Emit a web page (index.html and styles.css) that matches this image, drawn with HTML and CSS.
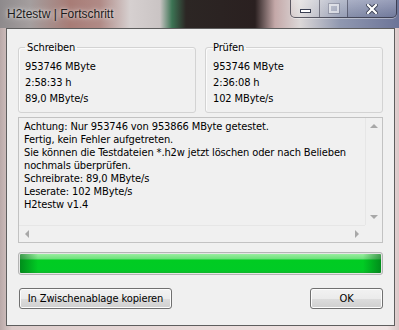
FILE: index.html
```html
<!DOCTYPE html>
<html lang="de">
<head>
    <meta charset="UTF-8">
    <title>H2testw | Fortschritt</title>
    <link rel="stylesheet" href="styles.css">
</head>
<body>

    <div class="window">
        <div class="titlebar">
            <span class="title">H2testw | Fortschritt</span>
            <div class="caption">
                <span class="cap cap-min"><i></i></span>
                <span class="cap cap-max"><i></i></span>
                <span class="cap cap-close">
                    <svg width="12" height="10" viewBox="0 0 12 10">
                        <path d="M2 1 L10 9 M10 1 L2 9" stroke="#3a3f52" stroke-width="4" stroke-linecap="square"/>
                        <path d="M2 1 L10 9 M10 1 L2 9" stroke="#fff" stroke-width="2.2" stroke-linecap="square"/>
                    </svg>
                </span>
            </div>
        </div>

        <div class="client">
            <div class="groups">
                <fieldset class="group">
                    <legend>Schreiben</legend>
                    <div class="row">953746 MByte</div>
                    <div class="row">2:58:33 h</div>
                    <div class="row">89,0 MByte/s</div>
                </fieldset>
                <fieldset class="group group-right">
                    <legend>Prüfen</legend>
                    <div class="row">953746 MByte</div>
                    <div class="row">2:36:08 h</div>
                    <div class="row">102 MByte/s</div>
                </fieldset>
            </div>

            <div class="log">
                <div class="log-text">
                    <div>Achtung: Nur 953746 von 953866 MByte getestet.</div>
                    <div>Fertig, kein Fehler aufgetreten.</div>
                    <div>Sie können die Testdateien *.h2w jetzt löschen oder nach Belieben</div>
                    <div>nochmals überprüfen.</div>
                    <div>Schreibrate: 89,0 MByte/s</div>
                    <div>Leserate: 102 MByte/s</div>
                    <div>H2testw v1.4</div>
                </div>
                <div class="vscroll">
                    <span class="arrow"><i class="tri tri-up"></i></span>
                    <span class="track"></span>
                    <span class="arrow"><i class="tri tri-down"></i></span>
                </div>
                <div class="hscroll">
                    <span class="arrow"><i class="tri tri-left"></i></span>
                    <span class="track"></span>
                    <span class="arrow"><i class="tri tri-right"></i></span>
                </div>
                <div class="corner"></div>
            </div>

            <div class="progress"><div class="progress-fill"></div></div>

            <div class="buttons">
                <button class="btn btn-copy">In Zwischenablage kopieren</button>
                <button class="btn btn-ok">OK</button>
            </div>
        </div>
    </div>

</body>
</html>
```

FILE: styles.css
```css
* {
    box-sizing: border-box;
}

body {
    margin: 0;
    font-family: "DejaVu Sans Condensed", "Liberation Sans", sans-serif;
    font-size: 11px;
    letter-spacing: -0.12px;
    color: #000;
}

.window {
    width: 399px;
    height: 330px;
    overflow: hidden;
    background: linear-gradient(90deg, #b9a9a8 0%, #dccbca 3%, #eadcdb 50%, #f0e4e4 97%, #d9c6c6 100%);
}

/* glass title bar */
.titlebar {
    height: 28px;
    display: flex;
    justify-content: space-between;
    align-items: flex-start;
    padding: 0 2px 0 7px;
    background: linear-gradient(90deg,
        #8e8a8c 0px, #a49e9e 30px, #a87c76 70px, #b08a86 100px,
        #d6d0d0 130px, #cac4c4 160px, #3c7454 172px, #2c2624 186px,
        #2a2020 255px, #c4a8a8 275px, #dcd8d8 300px, #9098b0 340px, #6c7498 399px);
}

.title {
    font-family: "Liberation Sans", sans-serif;
    font-size: 12px;
    letter-spacing: 0;
    line-height: 14px;
    margin-top: 7px;
    color: #1c1c1c;
    text-shadow: 0 0 6px rgba(255, 255, 255, 0.8), 0 0 3px rgba(255, 255, 255, 0.6);
}

.caption {
    display: flex;
    height: 18px;
    border: 1px solid rgba(40, 40, 55, 0.7);
    border-top: 0;
    border-radius: 0 0 5px 5px;
    overflow: hidden;
    box-shadow: 0 1px 0 rgba(255, 255, 255, 0.4);
}

.cap {
    width: 28px;
    display: flex;
    align-items: center;
    justify-content: center;
    border-left: 1px solid rgba(40, 40, 55, 0.5);
    background: linear-gradient(rgba(255, 255, 255, 0.35), rgba(255, 255, 255, 0.08));
}

.cap:first-child {
    border-left: 0;
}

.cap-min i {
    display: block;
    width: 11px;
    height: 4px;
    margin-top: 5px;
    background: #fff;
    border: 1px solid #3a3f52;
}

.cap-max i {
    display: block;
    width: 10px;
    height: 9px;
    border: 2px solid rgba(255, 255, 255, 0.55);
    outline: 1px solid rgba(60, 60, 80, 0.25);
}

.cap-close {
    width: 49px;
    background: linear-gradient(rgba(230, 232, 245, 0.35), rgba(120, 128, 160, 0.25));
}

/* dialog client area */
.client {
    width: 389px;
    height: 298px;
    margin-left: 6px;
    padding: 12px 11px 0 11px;
    background: #f0f0f0;
    border: 1px solid #5e5e5e;
}

.groups {
    display: grid;
    grid-template-columns: 1fr 1fr;
    gap: 9px;
}

.group {
    margin: 0;
    min-width: 0;
    padding: 5px 6px 5px 6px;
    border: 1px solid #d3d3d3;
    border-radius: 3px;
    box-shadow: inset 1px 1px 0 #fbfbfb;
}

.group-right {
    padding-left: 7px;
}

.group legend {
    padding: 0 2px;
    line-height: 13px;
}

.group-right legend {
    padding-left: 0;
}

.row {
    line-height: 16px;
}

/* read-only log box */
.log {
    margin-top: 4px;
    height: 126px;
    display: grid;
    grid-template-columns: 1fr 17px;
    grid-template-rows: 1fr 17px;
    border: 1px solid #c2c2c2;
    background: #f0f0f0;
}

.log-text {
    padding: 2px 5px;
    line-height: 13px;
    white-space: nowrap;
    overflow: hidden;
}

.vscroll,
.hscroll {
    display: flex;
    background: #f0f0f0;
}

.vscroll {
    flex-direction: column;
    border-left: 1px solid #e6e6e6;
}

.hscroll {
    border-top: 1px solid #e6e6e6;
}

.arrow {
    width: 16px;
    height: 16px;
    flex: none;
    display: flex;
    align-items: center;
    justify-content: center;
}

.track {
    flex: 1;
}

.corner {
    background: #f0f0f0;
}

.tri {
    width: 0;
    height: 0;
    border: 4px solid transparent;
}

.tri-up {
    border-bottom-color: #a8a8a8;
    border-top-width: 0;
}

.tri-down {
    border-top-color: #a8a8a8;
    border-bottom-width: 0;
}

.tri-left {
    border-right-color: #a8a8a8;
    border-left-width: 0;
}

.tri-right {
    border-left-color: #a8a8a8;
    border-right-width: 0;
}

/* progress bar */
.progress {
    margin-top: 9px;
    height: 23px;
    border: 1px solid #b4b4b4;
    border-radius: 3px;
    padding: 1px;
    background: #e6e6e6;
}

.progress-fill {
    height: 100%;
    border-radius: 1px;
    background:
        linear-gradient(90deg, rgba(0, 90, 20, 0.55) 0px, rgba(0, 90, 20, 0) 18px, rgba(0, 90, 20, 0) calc(100% - 18px), rgba(0, 90, 20, 0.55) 100%),
        linear-gradient(#9aeea0 0%, #6fe07c 25%, #00cc22 32%, #00cb25 85%, #12b52c 100%);
}

/* dialog buttons */
.buttons {
    margin-top: 13px;
    display: flex;
    justify-content: space-between;
}

.btn {
    height: 21px;
    padding: 0;
    font-family: inherit;
    font-size: 11px;
    letter-spacing: inherit;
    color: #000;
    border: 1px solid #707070;
    border-radius: 3px;
    background: linear-gradient(#f2f2f2 0%, #ebebeb 50%, #dddddd 50%, #cfcfcf 100%);
    box-shadow: inset 0 0 0 1px #fcfcfc;
}

.btn-copy {
    width: 153px;
    margin-left: 1px;
}

.btn-ok {
    width: 73px;
}
```
